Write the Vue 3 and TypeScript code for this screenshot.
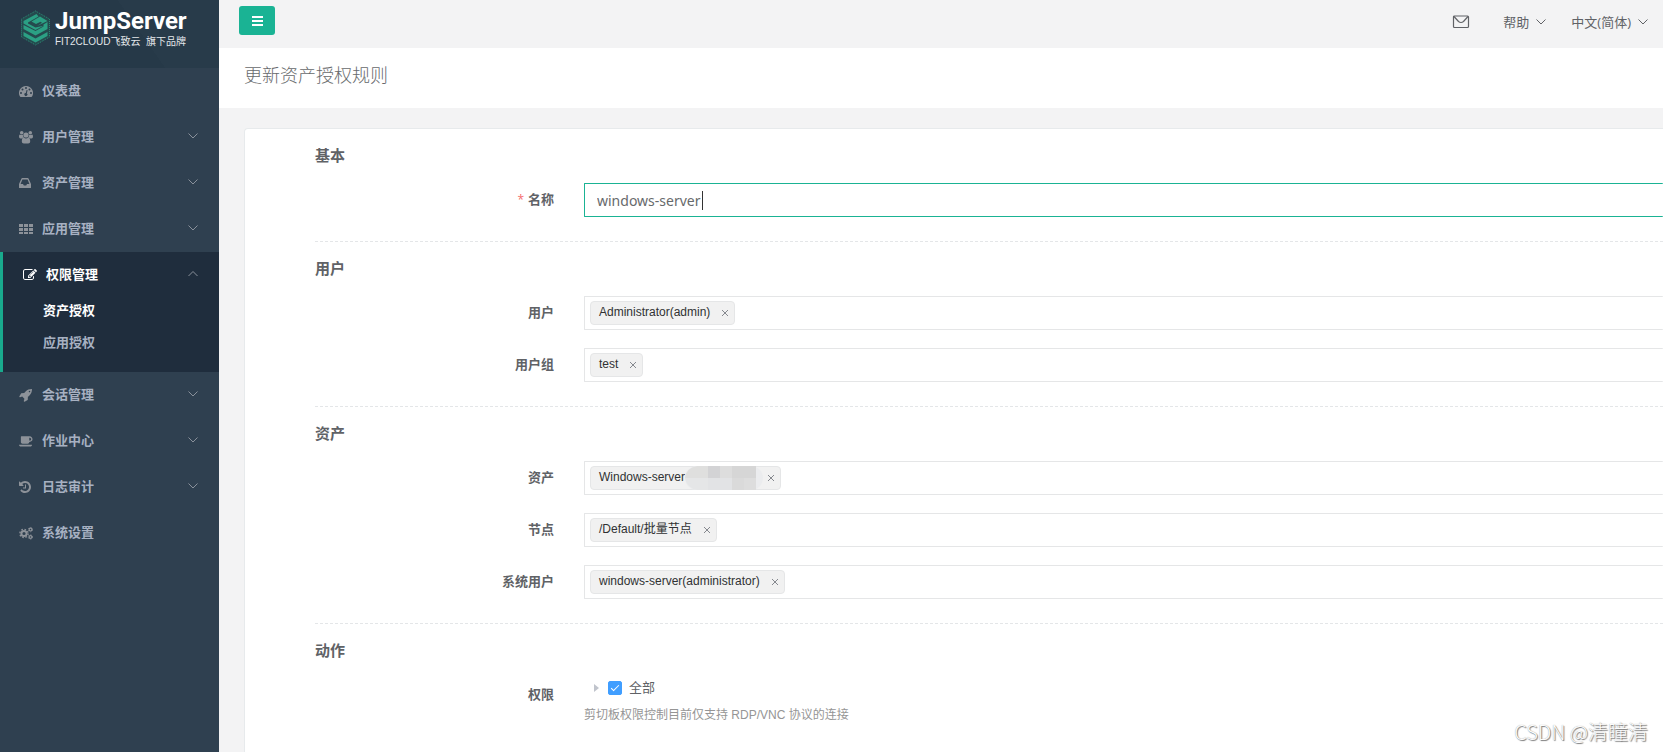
<script setup lang="ts">
import { ref } from 'vue'

interface MenuItem {
  label: string
  icon: string
  expandable: boolean
  children?: { label: string; current: boolean }[]
}
interface Tag {
  text: string
  masked?: boolean
}
interface Field {
  id: string
  label: string
  tags: Tag[]
}
interface Section {
  title: string
  fields: Field[]
}

const menu: MenuItem[] = [
  { label: '仪表盘', icon: 'dashboard', expandable: false },
  { label: '用户管理', icon: 'users', expandable: true },
  { label: '资产管理', icon: 'inbox', expandable: true },
  { label: '应用管理', icon: 'th', expandable: true },
  {
    label: '权限管理',
    icon: 'edit',
    expandable: true,
    children: [
      { label: '资产授权', current: true },
      { label: '应用授权', current: false },
    ],
  },
  { label: '会话管理', icon: 'rocket', expandable: true },
  { label: '作业中心', icon: 'coffee', expandable: true },
  { label: '日志审计', icon: 'history', expandable: true },
  { label: '系统设置', icon: 'cogs', expandable: false },
]

const name = ref('windows-server')
const allActions = ref(true)

const sections = ref<Section[]>([
  {
    title: '用户',
    fields: [
      { id: 'users', label: '用户', tags: [{ text: 'Administrator(admin)' }] },
      { id: 'groups', label: '用户组', tags: [{ text: 'test' }] },
    ],
  },
  {
    title: '资产',
    fields: [
      { id: 'assets', label: '资产', tags: [{ text: 'Windows-server', masked: true }] },
      { id: 'nodes', label: '节点', tags: [{ text: '/Default/批量节点' }] },
      { id: 'system-users', label: '系统用户', tags: [{ text: 'windows-server(administrator)' }] },
    ],
  },
])

function removeTag(field: Field, index: number): void {
  field.tags.splice(index, 1)
}
</script>

<template>
  <div class="app">
    <aside class="sidebar">
      <a class="brand" href="#">
        <svg class="brand-mark" viewBox="0 0 30 36" aria-hidden="true">
          <path d="M15 1 29 9v18l-14 8L1 27V9z" fill="#254a4e" stroke="#2b8f78" stroke-dasharray="1 1" />
          <path d="M16 4 3 11v2.500L15 20l8-4.200L15 17.500 7.500 13.500v-1L18 6.500z" fill="#2ba084" />
          <path d="m19.500 6.500-8.500 5 4.500 2.500 4.500-2.300 1.500 1-5 3.300 10.500-5z" fill="#2ba084" />
          <path d="M3 15v4l12 6.500L27 19v-7l-4 2.500v2L15 21zM3 22v4l12 6.500L27 26v-4l-12 6.500z" fill="#2ba084" />
        </svg>
        <span class="brand-text">
          <span class="brand-name">JumpServer</span>
          <span class="brand-sub">FIT2CLOUD飞致云&nbsp; 旗下品牌</span>
        </span>
      </a>
      <nav>
        <ul class="menu">
          <li v-for="item in menu" :key="item.label" :class="{ open: item.children }">
            <a class="menu-link" href="#">
              <svg v-if="item.icon === 'dashboard'" class="menu-icon" viewBox="0 0 14 14" aria-hidden="true">
                <path
                  fill-rule="evenodd"
                  d="M7 2a7 7 0 0 0-6 10.600q.2.400.6.400h10.800q.4 0 .6-.4A7 7 0 0 0 7 2zM2 8a1 1 0 1 0 0 2 1 1 0 0 0 0-2zm1.500-3.500a1 1 0 1 0 0 2 1 1 0 0 0 0-2zM7 3a1 1 0 1 0 0 2 1 1 0 0 0 0-2zm3.500 1.500a1 1 0 1 0 0 2 1 1 0 0 0 0-2zM12 8a1 1 0 1 0 0 2 1 1 0 0 0 0-2zM7.600 6 6.800 9.100a1.500 1.500 0 1 0 1 .3L8.600 6.300z"
                />
              </svg>
              <svg v-else-if="item.icon === 'users'" class="menu-icon" viewBox="0 0 14 14" aria-hidden="true">
                <circle cx="2.700" cy="2.800" r="1.800" />
                <circle cx="11.300" cy="2.800" r="1.800" />
                <circle cx="7" cy="5" r="2.600" />
                <path d="M0 6.500Q0 4.500 1 4.500q1.500 1 2.900.3Q3.700 6.300 4.700 7.500 3.500 7.500 2.800 8.400H1.500Q0 8.400 0 6.500zM14 6.500q0-2-1-2-1.500 1-2.900.3.2 1.500-.8 2.700 1.200 0 1.900.9h1.300q1.500 0 1.500-1.900zM2.800 11.500q0-4 2-4 2.200 1.800 4.400 0 2 0 2 4 0 2-2 2H4.800q-2 0-2-2z" />
              </svg>
              <svg v-else-if="item.icon === 'inbox'" class="menu-icon" viewBox="0 0 14 14" aria-hidden="true">
                <path
                  fill-rule="evenodd"
                  d="M2.500 2.500Q2.700 2 3.200 2h5.600q.5 0 .7.500L12 8v3.500q0 .5-.5.500H.5q-.5 0-.5-.5V8zM3.400 3.500 1.600 8H4l.8 1.500h2.400L8 8h2.400L8.600 3.500z"
                />
              </svg>
              <svg v-else-if="item.icon === 'th'" class="menu-icon" viewBox="0 0 14 14" aria-hidden="true">
                <path d="M0 2h4v3H0zM5 2h4v3H5zM10 2h4v3h-4zM0 6h4v3H0zM5 6h4v3H5zM10 6h4v3h-4zM0 10h4v2H0zM5 10h4v2H5zM10 10h4v2h-4z" />
              </svg>
              <svg v-else-if="item.icon === 'edit'" class="menu-icon" viewBox="0 0 1792 1792" aria-hidden="true">
                <path d="M888 1184l116-116-152-152-116 116v56h96v96h56zm440-720q-16-16-33 1l-350 350q-17 17-1 33t33-1l350-350q17-17 1-33zm80 594v190q0 119-84.500 203.500t-203.500 84.500h-832q-119 0-203.500-84.500t-84.500-203.500v-832q0-119 84.500-203.500t203.500-84.500h832q63 0 117 25 15 7 18 23 3 17-9 29l-49 49q-14 14-32 8-23-6-45-6h-832q-66 0-113 47t-47 113v832q0 66 47 113t113 47h832q66 0 113-47t47-113v-126q0-13 9-22l64-64q15-15 35-7t20 29zm-96-738l288 288-672 672h-288v-288zm444 132l-92 92-288-288 92-92q28-28 68-28t68 28l152 152q28 28 28 68t-28 68z" />
              </svg>
              <svg v-else-if="item.icon === 'rocket'" class="menu-icon" viewBox="0 0 1792 1792" aria-hidden="true">
                <path d="M1440 448q0-40-28-68t-68-28-68 28-28 68 28 68 68 28 68-28 28-68zm224-288q0 249-75.500 430.500t-253.500 360.500q-81 80-195 176l-20 379q-2 16-16 26l-384 224q-7 4-16 4-12 0-23-9l-64-64q-13-14-8-32l85-276-281-281-276 85q-3 1-9 1-14 0-23-9l-64-64q-17-19-5-39l224-384q10-14 26-16l379-20q96-114 176-195 188-187 358-258t431-71q14 0 24 9.500t10 22.500z" />
              </svg>
              <svg v-else-if="item.icon === 'coffee'" class="menu-icon" viewBox="0 0 1920 1792" aria-hidden="true">
                <path d="M1664 640q0-80-56-136t-136-56h-64v384h64q80 0 136-56t56-136zm-1664 768h1792q0 106-75 181t-181 75h-1280q-106 0-181-75t-75-181zm1856-768q0 159-112.500 271.500t-271.500 112.500h-64v32q0 92-66 158t-158 66h-704q-92 0-158-66t-66-158v-736q0-26 19-45t45-19h1152q159 0 271.500 112.500t112.500 271.500z" />
              </svg>
              <svg v-else-if="item.icon === 'history'" class="menu-icon" viewBox="128 0 1792 1792" aria-hidden="true">
                <path d="M1664 896q0 156-61 298t-164 245-245 164-298 61q-172 0-327-72.500t-264-204.500q-7-10-6.500-22.500t8.500-20.500l137-138q10-9 25-9 16 2 23 12 73 95 179 147t225 52q104 0 198.500-40.500t163.500-109.500 109.500-163.500 40.500-198.500-40.500-198.500-109.500-163.500-163.500-109.500-198.500-40.500q-98 0-188 35.500t-160 101.500l137 138q31 30 14 69-17 40-59 40h-448q-26 0-45-19t-19-45v-448q0-42 40-59 39-17 69 14l130 129q107-101 244.500-156.500t284.500-55.500q156 0 298 61t245 164 164 245 61 298zm-640-288v448q0 14-9 23t-23 9h-320q-14 0-23-9t-9-23v-64q0-14 9-23t23-9h224v-352q0-14 9-23t23-9h64q14 0 23 9t9 23z" />
              </svg>
              <svg v-else class="menu-icon" viewBox="0 0 14 14" aria-hidden="true">
                <g fill="none" stroke="currentColor">
                  <circle cx="5" cy="7.500" r="2.600" stroke-width="2" />
                  <circle cx="5" cy="7.500" r="4.100" stroke-width="1.400" stroke-dasharray="1.600 1.620" />
                  <circle cx="11.500" cy="3.600" r="1.400" stroke-width="1.200" />
                  <circle cx="11.500" cy="3.600" r="2.200" stroke-width="0.800" stroke-dasharray="1.100 1.200" />
                  <circle cx="11.500" cy="11" r="1.400" stroke-width="1.200" />
                  <circle cx="11.500" cy="11" r="2.200" stroke-width="0.800" stroke-dasharray="1.100 1.200" />
                </g>
              </svg>
              <span class="menu-label">{{ item.label }}</span>
              <svg v-if="item.expandable" class="chevron" viewBox="0 0 10 10" aria-hidden="true">
                <path :d="item.children ? 'M.5 7 5 2.500 9.500 7' : 'M.5 2.500 5 7l4.500-4.500'" />
              </svg>
            </a>
            <ul v-if="item.children" class="submenu">
              <li v-for="child in item.children" :key="child.label">
                <a href="#" :class="{ current: child.current }">{{ child.label }}</a>
              </li>
            </ul>
          </li>
        </ul>
      </nav>
    </aside>

    <div class="content">
      <header class="topbar">
        <button class="toggle" type="button" aria-label="菜单">
          <svg viewBox="0 0 12 10" aria-hidden="true">
            <path d="M1 0h11v2H1zM1 4h11v2H1zM1 8h11v2H1z" />
          </svg>
        </button>
        <div class="tools">
          <a class="mail" href="#" aria-label="消息">
            <svg viewBox="0 0 18 14" aria-hidden="true">
              <rect x="1.500" y="1" width="15" height="11.500" rx="1" />
              <path d="m2 1.500 4.500 5q2.500 2 5 0l4.500-5" />
            </svg>
          </a>
          <button class="drop" type="button">
            帮助
            <svg class="chevron" viewBox="0 0 10 10" aria-hidden="true"><path d="M.5 2.500 5 7l4.500-4.500" /></svg>
          </button>
          <button class="drop" type="button">
            中文(简体)
            <svg class="chevron" viewBox="0 0 10 10" aria-hidden="true"><path d="M.5 2.500 5 7l4.500-4.500" /></svg>
          </button>
        </div>
      </header>
      <div class="heading">
        <h1>更新资产授权规则</h1>
      </div>
      <main>
        <form class="card" @submit.prevent>
          <section>
            <h2>基本</h2>
            <div class="row">
              <label for="name"><span class="star">*</span>名称</label>
              <div class="control name-control">
                <input id="name" v-model="name" class="name-input" type="text" autocomplete="off" />
                <span class="caret"></span>
              </div>
            </div>
          </section>
          <section v-for="section in sections" :key="section.title">
            <h2>{{ section.title }}</h2>
            <div v-for="field in section.fields" :key="field.id" class="row">
              <label :for="field.id">{{ field.label }}</label>
              <div class="control select">
                <span v-for="(tag, i) in field.tags" :key="tag.text" class="tag">
                  <span>{{ tag.text }}</span>
                  <svg v-if="tag.masked" class="mask" viewBox="0 0 78 24" aria-hidden="true">
                    <rect y="0" width="78" height="24" rx="12" fill="#ebecee" />
                    <path d="M12 0h11v12H0Q1 2 12 0z" fill="#dfdfde" />
                    <path d="M0 12h23v12H12Q2 22 0 12z" fill="#e5e6e7" />
                    <path d="M23 0h12v12H23z" fill="#d3d3d5" />
                    <path d="M35 0h12v12H35zM59 12h12v12H59z" fill="#dddddd" />
                    <path d="M47 0h24v12H47z" fill="#d6d6d6" />
                    <path d="M23 12h24v12H23z" fill="#e2e3e5" />
                    <path d="M47 12h12v12H47z" fill="#dadada" />
                  </svg>
                  <button type="button" class="close" :aria-label="'移除 ' + tag.text" @click="removeTag(field, i)">
                    <svg viewBox="0 0 8 8" aria-hidden="true"><path d="m1 1 6 6M7 1 1 7" /></svg>
                  </button>
                </span>
                <input :id="field.id" class="search" type="text" autocomplete="off" />
              </div>
            </div>
          </section>
          <section>
            <h2>动作</h2>
            <div class="row">
              <span class="label">权限</span>
              <div class="control">
                <div class="tree">
                  <svg class="tree-arrow" viewBox="0 0 5 8" aria-hidden="true"><path d="M0 0l5 4-5 4z" /></svg>
                  <input id="all" v-model="allActions" type="checkbox" />
                  <label for="all">全部</label>
                </div>
                <p class="help">剪切板权限控制目前仅支持 RDP/VNC 协议的连接</p>
              </div>
            </div>
          </section>
        </form>
      </main>
    </div>
    <div class="watermark">CSDN @清瞳清</div>
  </div>
</template>

<style>
html,
body {
  height: 100%;
  margin: 0;
  overflow: hidden;
}
</style>

<style scoped>
.app {
  display: flex;
  height: 100vh;
  overflow: hidden;
  background: #f3f3f4;
  color: #606266;
  font: 13px/18px 'Open Sans', 'Noto Sans CJK SC', sans-serif;
}
a {
  color: inherit;
  text-decoration: none;
}
ul {
  margin: 0;
  padding: 0;
  list-style: none;
}
button {
  border: 0;
  background: none;
  color: inherit;
  font: inherit;
  cursor: pointer;
}
.sidebar {
  flex: 0 0 219px;
  background: #2f4050;
}
.brand {
  display: flex;
  height: 68px;
  box-sizing: border-box;
  padding: 10px 0 0 20px;
  background: linear-gradient(55deg, #263948 0 62%, #283b4a 62%);
  color: #fff;
}
.brand-mark {
  width: 31px;
  height: 36px;
  margin-right: 4px;
}
.brand-text {
  display: flex;
  flex-direction: column;
  white-space: nowrap;
}
.brand-name {
  font: 700 24px/22px Roboto, sans-serif;
}
.brand-sub {
  color: #e4e7ea;
  font: 10px/20px 'Liberation Sans', 'Noto Sans CJK SC', sans-serif;
}
.menu-link {
  display: flex;
  align-items: center;
  height: 46px;
  box-sizing: border-box;
  padding: 0 21px 2px 19px;
  color: #a7b1c2;
  font-weight: 700;
}
.menu-icon {
  width: 14px;
  height: 14px;
  margin-top: 2px;
  margin-right: 9px;
  fill: currentColor;
  color: #8d9299;
}
.menu-label {
  flex: 1;
}
.chevron {
  width: 10px;
  height: 10px;
  fill: none;
  stroke: #8a919b;
}
.open {
  border-left: 3px solid #19aa8d;
  background: #1f2d3d;
  padding-bottom: 17px;
}
.open .menu-link,
.open .menu-icon {
  color: #fff;
}
.open .menu-link {
  height: 45px;
  padding-bottom: 1px;
  padding-left: 20px;
}
.submenu {
  display: flex;
  flex-direction: column;
  gap: 6px;
}
.submenu a {
  display: block;
  padding-left: 40px;
  color: #a7b1c2;
  font-weight: 700;
  line-height: 26px;
}
.submenu .current {
  color: #fff;
}
.content {
  flex: 1;
  min-width: 0;
}
.topbar {
  display: flex;
  align-items: flex-start;
  justify-content: space-between;
  height: 48px;
  box-sizing: border-box;
  padding: 6px 15px 0 20px;
  background: #f3f3f4;
}
.toggle {
  display: flex;
  align-items: center;
  justify-content: center;
  width: 36px;
  height: 29px;
  padding: 0;
  border-radius: 3px;
  background: #1ab394;
}
.toggle svg {
  width: 12px;
  height: 10px;
  fill: #fff;
}
.tools {
  display: flex;
  align-items: center;
  height: 31px;
}
.mail {
  display: flex;
  margin-right: 33px;
}
.mail svg {
  width: 18px;
  height: 14px;
  fill: none;
  stroke: #606266;
  stroke-width: 1.2;
}
.drop {
  display: flex;
  align-items: center;
  gap: 7px;
  padding: 0;
}
.drop + .drop {
  margin-left: 25px;
}
.drop .chevron {
  stroke: #606266;
}
.heading {
  padding: 15px 25px 21px;
  background: #fff;
}
h1 {
  margin: 0;
  color: #676a6c;
  font-size: 18px;
  font-weight: 300;
  line-height: 24px;
}
main {
  padding: 20px 0 0 25px;
}
.card {
  min-height: 640px;
  border: 1px solid #e7eaec;
  border-right: 0;
  border-radius: 4px 0 0 0;
  background: #fff;
  padding-left: 70px;
}
section {
  padding: 17px 0 24px;
}
section + section {
  border-top: 1px dashed #e4e6e8;
}
h2 {
  margin: 0 0 19px;
  font-size: 15px;
  font-weight: 600;
  line-height: 18px;
}
.row {
  display: flex;
}
.row + .row {
  margin-top: 18px;
}
.row > label,
.label {
  flex: 0 0 239px;
  margin-right: 30px;
  text-align: right;
  font-weight: 700;
  line-height: 32px;
}
.star {
  margin-right: 4px;
  color: #f56c6c;
  font-size: 12px;
  font-weight: 400;
}
.control {
  flex: 1;
  min-width: 0;
}
.name-control {
  position: relative;
}
.name-input {
  display: block;
  width: 100%;
  height: 34px;
  box-sizing: border-box;
  padding: 0 12px;
  border: 1px solid #1ab394;
  border-right: 0;
  border-radius: 1px;
  outline: 0;
  background: #fff;
  color: #676a6c;
  font: 14px/20px 'Noto Sans', sans-serif;
}
.caret {
  position: absolute;
  top: 8px;
  left: 118px;
  width: 1px;
  height: 19px;
  background: #333;
}
.select {
  display: flex;
  align-items: center;
  gap: 6px;
  height: 34px;
  box-sizing: border-box;
  padding: 0 5px;
  border: 1px solid #e5e6e7;
  border-right: 0;
  border-radius: 1px;
  background: #fff;
}
.tag {
  display: flex;
  align-items: center;
  height: 24px;
  box-sizing: border-box;
  padding: 0 1px 0 8px;
  border: 1px solid #e5e6e7;
  border-radius: 4px;
  background: #f1f1f1;
  color: #303133;
  font: 12px/20px 'Liberation Sans', 'Noto Sans CJK SC', sans-serif;
  white-space: nowrap;
}
.tag > span {
  padding-bottom: 2px;
}
.mask {
  width: 78px;
  height: 24px;
}
.close {
  display: flex;
  align-items: center;
  justify-content: center;
  width: 16px;
  height: 16px;
  margin-left: 7px;
  padding: 0;
}
.mask + .close {
  margin-left: 0;
}
.close svg {
  width: 8px;
  height: 8px;
  fill: none;
  stroke: #85888e;
}
.search {
  flex: 1;
  min-width: 0;
  border: 0;
  outline: 0;
  background: transparent;
  font: inherit;
}
.tree {
  display: flex;
  align-items: center;
  height: 20px;
  padding-left: 10px;
}
.tree label {
  padding-bottom: 2px;
}
.tree-arrow {
  width: 5px;
  height: 8px;
  margin-right: 9px;
  fill: #c0c4cc;
}
.tree input {
  position: relative;
  width: 14px;
  height: 14px;
  margin: 0 7px 0 0;
  border: 1px solid #dcdfe6;
  border-radius: 2px;
  appearance: none;
}
.tree input:checked {
  border-color: #409eff;
  background: #409eff;
}
.tree input:checked::after {
  position: absolute;
  top: 1px;
  left: 4px;
  width: 3px;
  height: 7px;
  border: solid #fff;
  border-width: 0 1px 1px 0;
  content: '';
  transform: rotate(45deg);
}
.help {
  margin: 8px 0 0;
  color: #959595;
  font: 12px/18px 'Liberation Sans', 'Noto Sans CJK SC', sans-serif;
}
.watermark {
  position: absolute;
  right: 15px;
  bottom: 7px;
  color: #fdfdfd;
  font: 300 20px/26px 'Noto Sans CJK SC', sans-serif;
  text-shadow: 1px 1px 1px #777, 0 0 1px #999;
  pointer-events: none;
}
</style>
